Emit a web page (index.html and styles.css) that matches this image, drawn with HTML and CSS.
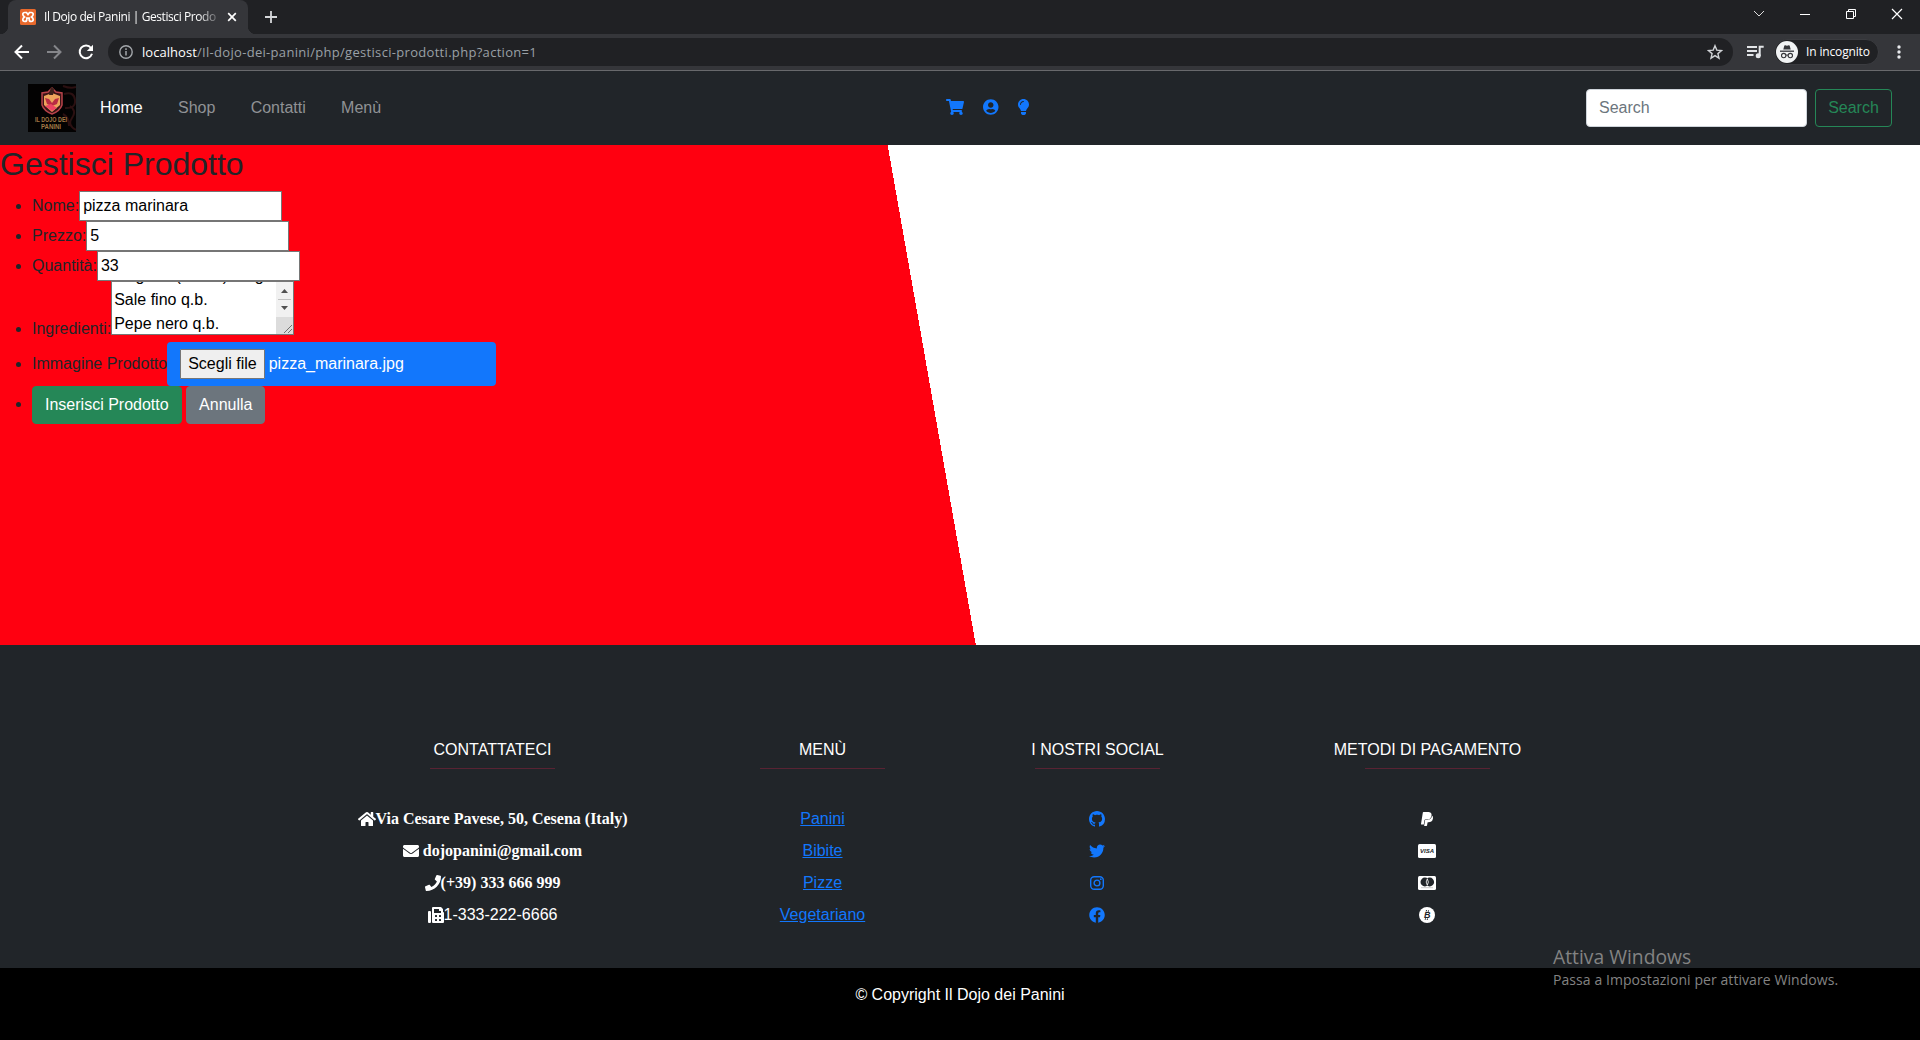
FILE: index.html
```html
<!DOCTYPE html>
<html lang="it">
<head>
<meta charset="utf-8">
<title>Il Dojo dei Panini | Gestisci Prodotto</title>
<link rel="stylesheet" href="styles.css">
</head>
<body>
<div class="browser">
  <div class="tabstrip">
    <div class="tab">
      <svg class="favicon" width="16" height="16" viewBox="0 0 16 16"><rect width="16" height="16" rx="1.500" fill="#e8692c"/><path d="M4.800 3.500h1.700L8 5.500l1.500-2h1.700c1.300 0 2 .8 2 1.800S12.500 7.300 11.500 8c1 .7 1.700 1.500 1.700 2.600s-.8 1.900-2 1.900c-1.300 0-2-.8-2-2V9.200H6.800v1.300c0 1.200-.7 2-2 2s-2-.8-2-1.900S3.500 8.700 4.500 8C3.500 7.300 2.800 6.300 2.800 5.300s.7-1.800 2-1.800z" fill="none" stroke="#fff" stroke-width="1.700"/></svg>
      <span class="tab-title">Il Dojo dei Panini | Gestisci Prodo</span>
      <svg class="tab-close" width="10" height="10" viewBox="0 0 10 10"><path d="M1.200 1.200l7.600 7.600M8.800 1.200L1.200 8.800" stroke="#fff" stroke-width="1.700"/></svg>
    </div>
    <svg class="new-tab" width="12" height="12" viewBox="0 0 12 12"><path d="M6 0v12M0 6h12" stroke="#d5d7da" stroke-width="1.800"/></svg>
    <div class="window-buttons">
      <svg width="12" height="12" viewBox="0 0 12 12"><path d="M1 3l5 5 5-5" fill="none" stroke="#ddd"/></svg>
      <svg width="12" height="12" viewBox="0 0 12 12"><path d="M1 6.500h10" stroke="#fff"/></svg>
      <svg width="12" height="12" viewBox="0 0 12 12"><path d="M1.500 3.500h7v7h-7zM3.500 3.500v-2h7v7h-2" fill="none" stroke="#fff"/></svg>
      <svg width="12" height="12" viewBox="0 0 12 12"><path d="M1 1l10 10M11 1L1 11" stroke="#fff" stroke-width="1.200"/></svg>
    </div>
  </div>
  <div class="toolbar">
    <svg class="tool-back" width="16" height="16" viewBox="0 0 16 16"><path d="M15 8H2M8 1.500L1.500 8 8 14.500" fill="none" stroke="#fff" stroke-width="2"/></svg>
    <svg class="tool-forward" width="16" height="16" viewBox="0 0 16 16"><path d="M1 8h13M8 1.500L14.500 8 8 14.500" fill="none" stroke="#85868a" stroke-width="2"/></svg>
    <svg class="tool-reload" width="16" height="16" viewBox="0 0 16 16"><path d="M13 4A6.300 6.300 0 1 0 14 9.800" fill="none" stroke="#fff" stroke-width="2"/><path d="M15 .8v6.200H8.800z" fill="#fff"/></svg>
    <div class="omnibox">
      <svg width="14" height="14" viewBox="0 0 14 14"><circle cx="7" cy="7" r="6.200" fill="none" stroke="#a3a7ab" stroke-width="1.400"/><path d="M7 6v4.500M7 3.300v1.600" stroke="#a3a7ab" stroke-width="1.500"/></svg>
      <span class="url"><b>localhost</b>/Il-dojo-dei-panini/php/gestisci-prodotti.php?action=1</span>
      <svg class="star" width="16" height="16" viewBox="0 0 16 16"><path d="M8 1.700l1.800 4.400 4.700.4-3.600 3.100 1.100 4.600L8 11.700l-4 2.500 1.100-4.600L1.500 6.500l4.700-.4z" fill="none" stroke="#d0d3d6" stroke-width="1.400"/></svg>
    </div>
    <svg class="media" width="17" height="14" viewBox="0 0 17 14"><path d="M0 2h10M0 6h10M0 10h6.500" stroke="#e3e5e8" stroke-width="1.800"/><path d="M12.700 11V1.700h4" fill="none" stroke="#e3e5e8" stroke-width="2"/><circle cx="11.200" cy="10.800" r="2.500" fill="#e3e5e8"/></svg>
    <div class="incognito">
      <svg width="22" height="22" viewBox="0 0 22 22"><circle cx="11" cy="11" r="11" fill="#f1f3f4"/><path d="M7.300 8.500l1-3.800q.2-.6.900-.4l1.800.5 1.800-.5q.7-.2.900.4l1 3.800z" fill="#35363a"/><path d="M4 10.200h14" stroke="#35363a" stroke-width="1.300"/><circle cx="7.700" cy="14.600" r="2.200" fill="none" stroke="#35363a" stroke-width="1.100"/><circle cx="14.300" cy="14.600" r="2.200" fill="none" stroke="#35363a" stroke-width="1.100"/><path d="M9.900 14.300q1.100-.7 2.200 0" fill="none" stroke="#35363a"/></svg>
      <span>In incognito</span>
    </div>
    <svg class="kebab" width="4" height="14" viewBox="0 0 4 14"><g fill="#e8eaed"><circle cx="2" cy="2" r="1.700"/><circle cx="2" cy="7" r="1.700"/><circle cx="2" cy="12" r="1.700"/></g></svg>
  </div>
</div>

<div class="page">
  <nav class="navbar">
    <svg class="brand" width="48" height="48" viewBox="0 0 48 48">
      <rect width="48" height="48" fill="#030202"/>
      <path d="M35 2q8 3 13 1M36 10q10-3 11 6T37 24M42 22q7 5 2 12t4 12M35 30q6 3 6 12" fill="none" stroke="#2b1011" stroke-width="2"/>
      <path d="M24 4l4 4 6 1v12q-2 6-10 9-8-3-10-9V9l6-1z" fill="#3c1517" stroke="#b8434a" stroke-width="1.500"/>
      <path d="M16 12l8-3 8 3v9l-8 7-8-7z" fill="#eda45c"/>
      <path d="M17 14l4 1 3 4 3-4 4-1-2 6-5 2-5-2z" fill="#b92c43"/>
      <path d="M17 22l6-2 6 4-5 3z" fill="#ee4563"/>
      <path d="M23 3l3 2-1 6h-4z" fill="#3c211b"/>
      <g class="brand-text"><text x="7" y="37.500" textLength="32" lengthAdjust="spacingAndGlyphs">IL DOJO DEI</text><text x="13" y="45" textLength="20" lengthAdjust="spacingAndGlyphs">PANINI</text></g>
    </svg>
    <div class="nav-links"><a class="active">Home</a><a>Shop</a><a>Contatti</a><a>Menù</a></div>
    <div class="nav-icons">
      <svg width="18" height="16" viewBox="0 0 576 512"><path d="M528.120 301.319l47.273-208C578.806 78.301 567.391 64 551.990 64H159.208l-9.166-44.810C147.758 8.021 137.930 0 126.529 0H24C10.745 0 0 10.745 0 24v16c0 13.255 10.745 24 24 24h69.883l70.248 343.435C147.325 417.100 136 435.222 136 456c0 30.928 25.072 56 56 56s56-25.072 56-56c0-15.674-6.447-29.835-16.824-40h209.647C430.447 426.165 424 440.326 424 456c0 30.928 25.072 56 56 56s56-25.072 56-56c0-22.172-12.888-41.332-31.579-50.405l5.517-24.276c3.413-15.018-8.002-29.319-23.403-29.319H218.117l-6.545-32h293.145c11.206 0 20.920-7.754 23.403-18.681z"/></svg>
      <svg width="15.500" height="16" viewBox="0 0 496 512"><path d="M248 8C111 8 0 119 0 256s111 248 248 248 248-111 248-248S385 8 248 8zm0 96c48.600 0 88 39.400 88 88s-39.400 88-88 88-88-39.400-88-88 39.400-88 88-88zm0 344c-58.700 0-111.300-26.600-146.500-68.200 18.800-35.400 55.600-59.800 98.500-59.800 2.400 0 4.800.4 7.100 1.100 13 4.200 26.600 6.900 40.900 6.900 14.300 0 28-2.700 40.900-6.900 2.300-.7 4.700-1.100 7.100-1.100 42.900 0 79.700 24.400 98.500 59.800C359.300 421.400 306.700 448 248 448z"/></svg>
      <svg width="11" height="16" viewBox="0 0 352 512"><path d="M96.060 454.350c.01 6.290 1.870 12.450 5.360 17.690l17.090 25.690a31.990 31.990 0 0 0 26.640 14.280h61.710a31.990 31.990 0 0 0 26.640-14.280l17.090-25.690a31.989 31.989 0 0 0 5.360-17.690l.04-38.350H96.010l.05 38.350zM0 176c0 44.370 16.450 84.850 43.560 115.780 16.520 18.850 42.360 58.230 52.210 91.450.04.26.07.52.11.78h160.240c.04-.26.07-.51.11-.78 9.850-33.220 35.690-72.600 52.210-91.450C335.550 260.850 352 220.370 352 176 352 78.610 272.910-.3 175.450 0 73.440.31 0 82.970 0 176zm176-80c-44.110 0-80 35.890-80 80 0 8.840-7.160 16-16 16s-16-7.160-16-16c0-61.760 50.240-112 112-112 8.840 0 16 7.160 16 16s-7.160 16-16 16z"/></svg>
    </div>
    <form class="search"><input class="search-input" placeholder="Search"><button type="button" class="btn btn-outline">Search</button></form>
  </nav>

  <main class="main">
    <h2>Gestisci Prodotto</h2>
    <ul class="fields">
      <li>Nome:<input class="field" value="pizza marinara"></li>
      <li>Prezzo:<input class="field" value="5"></li>
      <li>Quantità:<input class="field" value="33"></li>
      <li class="tall">Ingredienti:<span class="textarea"><span class="lines"><span>Origano (secco) 10 g</span><span>Sale fino q.b.</span><span>Pepe nero q.b.</span></span><span class="scroll"><svg width="17" height="52" viewBox="0 0 17 52"><path d="M0 0h17v52H0z" fill="#f1f1f1"/><path d="M0 35h17v17H0z" fill="#dcdcdc"/><path d="M2 17.500h13" stroke="#c1c1c1"/><path d="M5 11l3.500-4 3.500 4zM5 24h7l-3.500 4z" fill="#505050"/><path d="M8 51l8-8M12 51l4-4" stroke="#707070"/></svg></span></span></li>
      <li class="file-row">Immagine Prodotto<span class="file"><span class="choose">Scegli file</span>pizza_marinara.jpg</span></li>
      <li class="actions"><button type="button" class="btn btn-success">Inserisci Prodotto</button> <button type="button" class="btn btn-secondary">Annulla</button></li>
    </ul>
  </main>

  <footer class="footer">
    <section class="col wide">
      <h6>CONTATTATECI</h6><hr>
      <p class="serif"><svg width="18" height="16" viewBox="0 0 576 512"><path d="M280.370 148.260L96 300.110V464a16 16 0 0 0 16 16l112.060-.29a16 16 0 0 0 15.920-16V368a16 16 0 0 1 16-16h64a16 16 0 0 1 16 16v95.640a16 16 0 0 0 16 16.050L464 480a16 16 0 0 0 16-16V300L295.670 148.260a12.190 12.190 0 0 0-15.300 0zM571.600 251.470L488 182.560V44.050a12 12 0 0 0-12-12h-56a12 12 0 0 0-12 12v72.610L318.470 43a48 48 0 0 0-61 0L4.340 251.470a12 12 0 0 0-1.600 16.900l25.500 31A12 12 0 0 0 45.150 301l235.220-193.740a12.190 12.190 0 0 1 15.300 0L530.900 301a12 12 0 0 0 16.900-1.600l25.500-31a12 12 0 0 0-1.700-16.930z"/></svg>Via Cesare Pavese, 50, Cesena (Italy)</p>
      <p class="serif"><svg width="16" height="16" viewBox="0 0 512 512"><path d="M502.300 190.800c3.900-3.100 9.700-.2 9.700 4.700V400c0 26.500-21.500 48-48 48H48c-26.500 0-48-21.500-48-48V195.600c0-5 5.700-7.800 9.700-4.700 22.400 17.400 52.100 39.500 154.100 113.600 21.100 15.400 56.700 47.800 92.200 47.600 35.700.3 72-32.800 92.300-47.600 102-74.100 131.600-96.300 154-113.700zM256 320c23.200.4 56.600-29.200 73.400-41.400 132.700-96.300 142.800-104.700 173.400-128.700 5.800-4.500 9.200-11.500 9.200-18.900v-19c0-26.500-21.500-48-48-48H48c-26.500 0-48 21.500-48 48v19c0 7.400 3.400 14.300 9.200 18.900 30.600 23.900 40.700 32.400 173.400 128.700 16.800 12.200 50.200 41.800 73.400 41.400z"/></svg>&nbsp;dojopanini@gmail.com</p>
      <p class="serif"><svg width="16" height="16" viewBox="0 0 512 512"><path d="M493.400 24.600l-104-24c-11.300-2.600-22.900 3.300-27.500 13.900l-48 112c-4.200 9.800-1.400 21.300 6.900 28l60.600 49.600c-36 76.700-98.900 140.500-177.200 177.200l-49.600-60.600c-6.800-8.300-18.200-11.100-28-6.900l-112 48C3.900 366.500-2 378.100.6 389.400l24 104C27.100 504.200 36.700 512 48 512c256.100 0 464-207.500 464-464 0-11.200-7.700-20.900-18.600-23.400z"/></svg>(+39) 333 666 999</p>
      <p><svg width="16" height="16" viewBox="0 0 512 512"><path d="M480 160V77.250a32 32 0 0 0-9.380-22.630L425.370 9.370A32 32 0 0 0 402.750 0H160a32 32 0 0 0-32 32v448a32 32 0 0 0 32 32h320a32 32 0 0 0 32-32V192a32 32 0 0 0-32-32zM288 432a16 16 0 0 1-16 16h-32a16 16 0 0 1-16-16v-32a16 16 0 0 1 16-16h32a16 16 0 0 1 16 16zm0-128a16 16 0 0 1-16 16h-32a16 16 0 0 1-16-16v-32a16 16 0 0 1 16-16h32a16 16 0 0 1 16 16zm128 128a16 16 0 0 1-16 16h-32a16 16 0 0 1-16-16v-32a16 16 0 0 1 16-16h32a16 16 0 0 1 16 16zm0-128a16 16 0 0 1-16 16h-32a16 16 0 0 1-16-16v-32a16 16 0 0 1 16-16h32a16 16 0 0 1 16 16zm0-112H192V64h160v48a16 16 0 0 0 16 16h48zM64 128H32a32 32 0 0 0-32 32v320a32 32 0 0 0 32 32h32a32 32 0 0 0 32-32V160a32 32 0 0 0-32-32z"/></svg>1-333-222-6666</p>
    </section>
    <section class="col links">
      <h6>MENÙ</h6><hr>
      <p><a>Panini</a></p><p><a>Bibite</a></p><p><a>Pizze</a></p><p><a>Vegetariano</a></p>
    </section>
    <section class="col links icons">
      <h6>I NOSTRI SOCIAL</h6><hr>
      <p><svg width="16" height="16" viewBox="0 0 16 16"><path d="M8 0C3.580 0 0 3.580 0 8c0 3.540 2.290 6.530 5.470 7.590.4.07.55-.17.55-.38 0-.19-.01-.82-.01-1.490-2.010.37-2.530-.49-2.690-.94-.09-.23-.48-.94-.82-1.130-.28-.15-.68-.52-.01-.53.63-.01 1.080.58 1.230.82.72 1.210 1.870.87 2.330.66.07-.52.28-.87.51-1.070-1.780-.2-3.640-.89-3.640-3.950 0-.87.31-1.590.82-2.150-.08-.2-.36-1.020.08-2.120 0 0 .67-.21 2.200.82.64-.18 1.320-.27 2-.27.68 0 1.360.09 2 .27 1.530-1.040 2.200-.82 2.200-.82.44 1.100.16 1.920.08 2.120.51.56.82 1.270.82 2.150 0 3.070-1.870 3.750-3.650 3.950.29.25.54.73.54 1.480 0 1.070-.01 1.930-.01 2.200 0 .21.15.46.55.38A8.012 8.012 0 0 0 16 8c0-4.420-3.580-8-8-8z"/></svg></p>
      <p><svg width="16" height="16" viewBox="0 0 512 512"><path d="M459.370 151.716c.325 4.548.325 9.097.325 13.645 0 138.720-105.583 298.558-298.558 298.558-59.452 0-114.680-17.219-161.137-47.106 8.447.974 16.568 1.299 25.340 1.299 49.055 0 94.213-16.568 130.274-44.832-46.132-.975-84.792-31.188-98.112-72.772 6.498.974 12.995 1.624 19.818 1.624 9.421 0 18.843-1.300 27.614-3.573-48.081-9.747-84.143-51.980-84.143-102.985v-1.299c13.969 7.797 30.214 12.670 47.431 13.319-28.264-18.843-46.781-51.005-46.781-87.391 0-19.492 5.197-37.360 14.294-52.954 51.655 63.675 129.300 105.258 216.365 109.807-1.624-7.797-2.599-15.918-2.599-24.040 0-57.828 46.782-104.934 104.934-104.934 30.213 0 57.502 12.670 76.670 33.137 23.715-4.548 46.456-13.320 66.599-25.340-7.798 24.366-24.366 44.833-46.132 57.827 21.117-2.273 41.584-8.122 60.426-16.243-14.292 20.791-32.161 39.308-52.628 54.253z"/></svg></p>
      <p><svg width="16" height="16" viewBox="0 0 16 16"><rect x="1.700" y="1.700" width="12.600" height="12.600" rx="3.500" fill="none" stroke="#1277fc" stroke-width="1.400"/><circle cx="8" cy="8" r="2.900" fill="none" stroke="#1277fc" stroke-width="1.400"/><circle cx="11.800" cy="4.200" r=".9"/></svg></p>
      <p><svg width="16" height="16" viewBox="0 0 512 512"><path d="M504 256C504 119 393 8 256 8S8 119 8 256c0 123.780 90.690 226.380 209.250 245V327.690h-63V256h63v-54.640c0-62.150 37-96.480 93.670-96.480 27.140 0 55.520 4.840 55.520 4.840v61h-31.280c-30.800 0-40.410 19.120-40.410 38.730V256h68.780l-11 71.690h-57.780V501C413.310 482.380 504 379.780 504 256z"/></svg></p>
    </section>
    <section class="col wide icons">
      <h6>METODI DI PAGAMENTO</h6><hr>
      <p><svg width="12" height="16" viewBox="0 0 384 512"><path d="M111.400 295.900c-3.500 19.200-17.400 108.700-21.500 134-.3 1.800-1 2.500-3 2.500H12.300c-7.600 0-13.100-6.600-12.100-13.900L58.800 46.600c1.500-9.600 10.100-16.900 20-16.900 152.300 0 165.100-3.700 204 11.400 60.100 23.300 65.600 79.500 44 140.300-21.500 62.600-72.500 89.500-140.100 90.300-43.400.7-69.500-7-75.300 24.200zM357.100 152c-1.800-1.300-2.500-1.800-3 1.300-2 11.400-5.100 22.500-8.800 33.600-39.900 113.800-150.500 103.900-204.500 103.900-6.100 0-10.100 3.300-10.900 9.400-22.600 140.400-27.100 169.700-27.100 169.700-1 7.100 3.500 12.900 10.600 12.900h63.500c8.600 0 15.700-6.300 17.400-14.900.7-5.400-1.100 6.100 14.400-91.300 4.600-22 14.300-19.700 29.300-19.700 71 0 126.400-28.800 142.900-112.300 6.500-34.800 4.600-71.400-23.800-92.600z"/></svg></p>
      <p><svg class="card" width="18" height="16" viewBox="0 0 18 16"><rect y="1" width="18" height="14" rx="1.500"/><text x="2" y="10.200" textLength="14" lengthAdjust="spacingAndGlyphs">VISA</text></svg></p>
      <p><svg width="18" height="16" viewBox="0 0 18 16"><rect y="1" width="18" height="14" rx="1.500"/><g fill="#212529"><circle cx="6.900" cy="7" r="4.400"/><circle cx="11.700" cy="7" r="4.400"/></g><path d="M9.300 3.800q-2.200 3.200 0 6.400 2.200-3.200 0-6.400z" fill="#212529" stroke="#fff" stroke-width=".8"/><path d="M3 12.700h12" stroke="#bbb" stroke-width=".8"/></svg></p>
      <p><svg class="coin" width="16" height="16" viewBox="0 0 16 16"><circle cx="8" cy="8" r="8"/><path d="M7.500 3l-.3 1.500M9.500 3.300l-.3 1.500M6.500 11.300l-.3 1.500M8.500 11.500l-.3 1.500" stroke="#212529"/><text x="4.900" y="11.300">B</text></svg></p>
    </section>
  </footer>
  <div class="copyright">© Copyright Il Dojo dei Panini</div>
</div>

<div class="watermark"><div class="wm-title">Attiva Windows</div><div class="wm-text">Passa a Impostazioni per attivare Windows.</div></div>
</body>
</html>
```
FILE: styles.css
```css
* { box-sizing: border-box; }
body { margin: 0; width: 1920px; height: 1040px; overflow: hidden; font: 16px/24px "Liberation Sans", Arial, sans-serif; color: #212529; }
svg { flex: none; }

.browser { height: 71px; background: #35363a; border-bottom: 1px solid #68696c; font-family: "Open Sans", "Noto Sans", sans-serif; }
.tabstrip { height: 34px; background: #202124; display: flex; align-items: center; padding-left: 8px; }
.tab { position: relative; width: 240px; height: 34px; background: #35363a; border-radius: 8px 8px 0 0; display: flex; align-items: center; padding-left: 12px; }
.tab::before, .tab::after { content: ""; position: absolute; bottom: 0; width: 8px; height: 8px; }
.tab::before { left: -8px; background: radial-gradient(circle at 0 0, #202124 8px, #35363a 8.5px); }
.tab::after { right: -8px; background: radial-gradient(circle at 100% 0, #202124 8px, #35363a 8.5px); }
.tab-title { margin-left: 8px; width: 175px; white-space: nowrap; font-size: 12px; letter-spacing: -.42px; color: #fff; mask-image: linear-gradient(90deg, #000 88%, transparent 102%); }
.tab-close { margin-left: 8px; }
.new-tab { margin-left: 17px; }
.window-buttons { margin-left: auto; display: flex; gap: 34px; padding: 0 17px 6px 0; }
.toolbar { height: 36px; display: flex; align-items: center; }
.tool-back { margin-left: 14px; }
.tool-forward { margin-left: 16px; }
.tool-reload { margin-left: 16px; }
.omnibox { margin-left: 14px; width: 1625px; height: 28px; border-radius: 14px; background: #202124; display: flex; align-items: center; padding: 0 10px 0 11px; }
.url { margin-left: 9px; font-size: 13px; letter-spacing: .31px; color: #9aa0a6; white-space: nowrap; }
.url b { font-weight: 400; letter-spacing: .05px; color: #fff; }
.star { margin-left: auto; }
.media { margin-left: 14px; }
.incognito { margin-left: 10px; width: 105px; height: 26px; border-radius: 13px; background: #202124; border: 1px solid #3b3c40; display: flex; align-items: center; padding-left: 1px; gap: 8px; font-size: 12px; letter-spacing: -.15px; color: #fff; white-space: nowrap; }
.kebab { margin-left: 18px; }

.page { height: 969px; background: linear-gradient(80deg, #ff0010 50%, #fff 50%); display: flex; flex-direction: column; }
.navbar { height: 74px; background: #212529; display: flex; align-items: center; padding: 0 28px; }
.brand-text { font: bold 7px "Liberation Sans", sans-serif; fill: #a47a45; }
.nav-links { margin-left: 24px; width: 846px; display: flex; gap: 35.300px; color: #909295; }
.nav-links .active { color: #fff; }
.nav-icons { display: flex; align-items: center; gap: 19px; padding-bottom: 2px; fill: #1277fc; }
.search { margin-left: auto; display: flex; gap: 8px; }
.search-input { width: 221px; height: 38px; padding: 6px 12px; border: 1px solid #ced4da; border-radius: 4px; font: inherit; background: #fff; }
.search-input::placeholder { color: #6c757d; opacity: 1; }
.btn { height: 38px; padding: 6px 12px; border: 1px solid; border-radius: 4px; font: inherit; line-height: 24px; color: #fff; vertical-align: middle; }
.btn-outline { width: 77px; background: none; color: #258757; border-color: #258757; }
.btn-success { background: #258757; border-color: #258757; }
.btn-secondary { background: #6c757d; border-color: #6c757d; }

.main { height: 500px; }
.main h2 { margin: 0 0 8px; font-size: 32px; font-weight: 400; line-height: 38.4px; }
.fields { margin: 0; padding-left: 32px; }
.fields li { height: 30px; }
.fields .tall { height: 60.4px; }
.fields .file-row { height: 44px; }
.field { width: 203px; height: 30px; margin: 0; padding: 2px 3px; border: 1px solid #767676; border-bottom-width: 1.500px; font: inherit; color: #000; background: #fff; }
.textarea { display: inline-flex; justify-content: space-between; width: 183px; height: 54px; border: 1px solid #767676; background: #fff; color: #000; vertical-align: bottom; overflow: hidden; margin-bottom: 6px; }
.lines { display: flex; flex-direction: column; justify-content: flex-end; padding-left: 2px; margin-bottom: -2px; white-space: nowrap; }
.lines span { height: 24px; flex: none; }
.scroll { display: flex; }
.file { display: inline-flex; align-items: center; width: 329px; height: 44px; padding: 0 13px; gap: 4px; border-radius: 4px; background: #1277fc; color: #fff; }
.choose { height: 30px; padding: 2px 7px; border: 1px solid #767676; border-radius: 1px; background: #efefef; color: #000; }

.footer { height: 323px; background: #212529; color: #fff; padding: 93px 300px 0; display: flex; justify-content: space-around; text-align: center; }
.col { width: 220px; }
.wide { width: 330px; }
.footer h6 { margin: 0; font: inherit; }
.footer hr { width: 125px; height: 1px; margin: 6px auto 38px; border: 0; background: #592333; }
.footer p { margin: 0 0 8px; height: 24px; display: flex; justify-content: center; align-items: center; white-space: nowrap; }
.footer .icons p { padding-right: 1px; }
.footer svg { fill: #fff; }
.serif { font-family: "Liberation Serif", "Times New Roman", serif; font-weight: 700; }
.links a { color: #1277fc; text-decoration: underline; }
.links svg { fill: #1277fc; }
.card text { font: italic bold 5.5px "Liberation Sans", sans-serif; fill: #212529; }
.coin text { font: italic bold 9px "Liberation Sans", sans-serif; fill: #212529; }
.copyright { flex: 1; background: #000; color: #fff; text-align: center; padding-top: 15px; }

.watermark { position: absolute; left: 1553px; top: 943px; font-family: "Open Sans", "Noto Sans", sans-serif; color: #838383; white-space: nowrap; }
.wm-title { font-size: 19.300px; line-height: 27px; }
.wm-text { font-size: 14px; line-height: 20px; letter-spacing: .07px; }
```
